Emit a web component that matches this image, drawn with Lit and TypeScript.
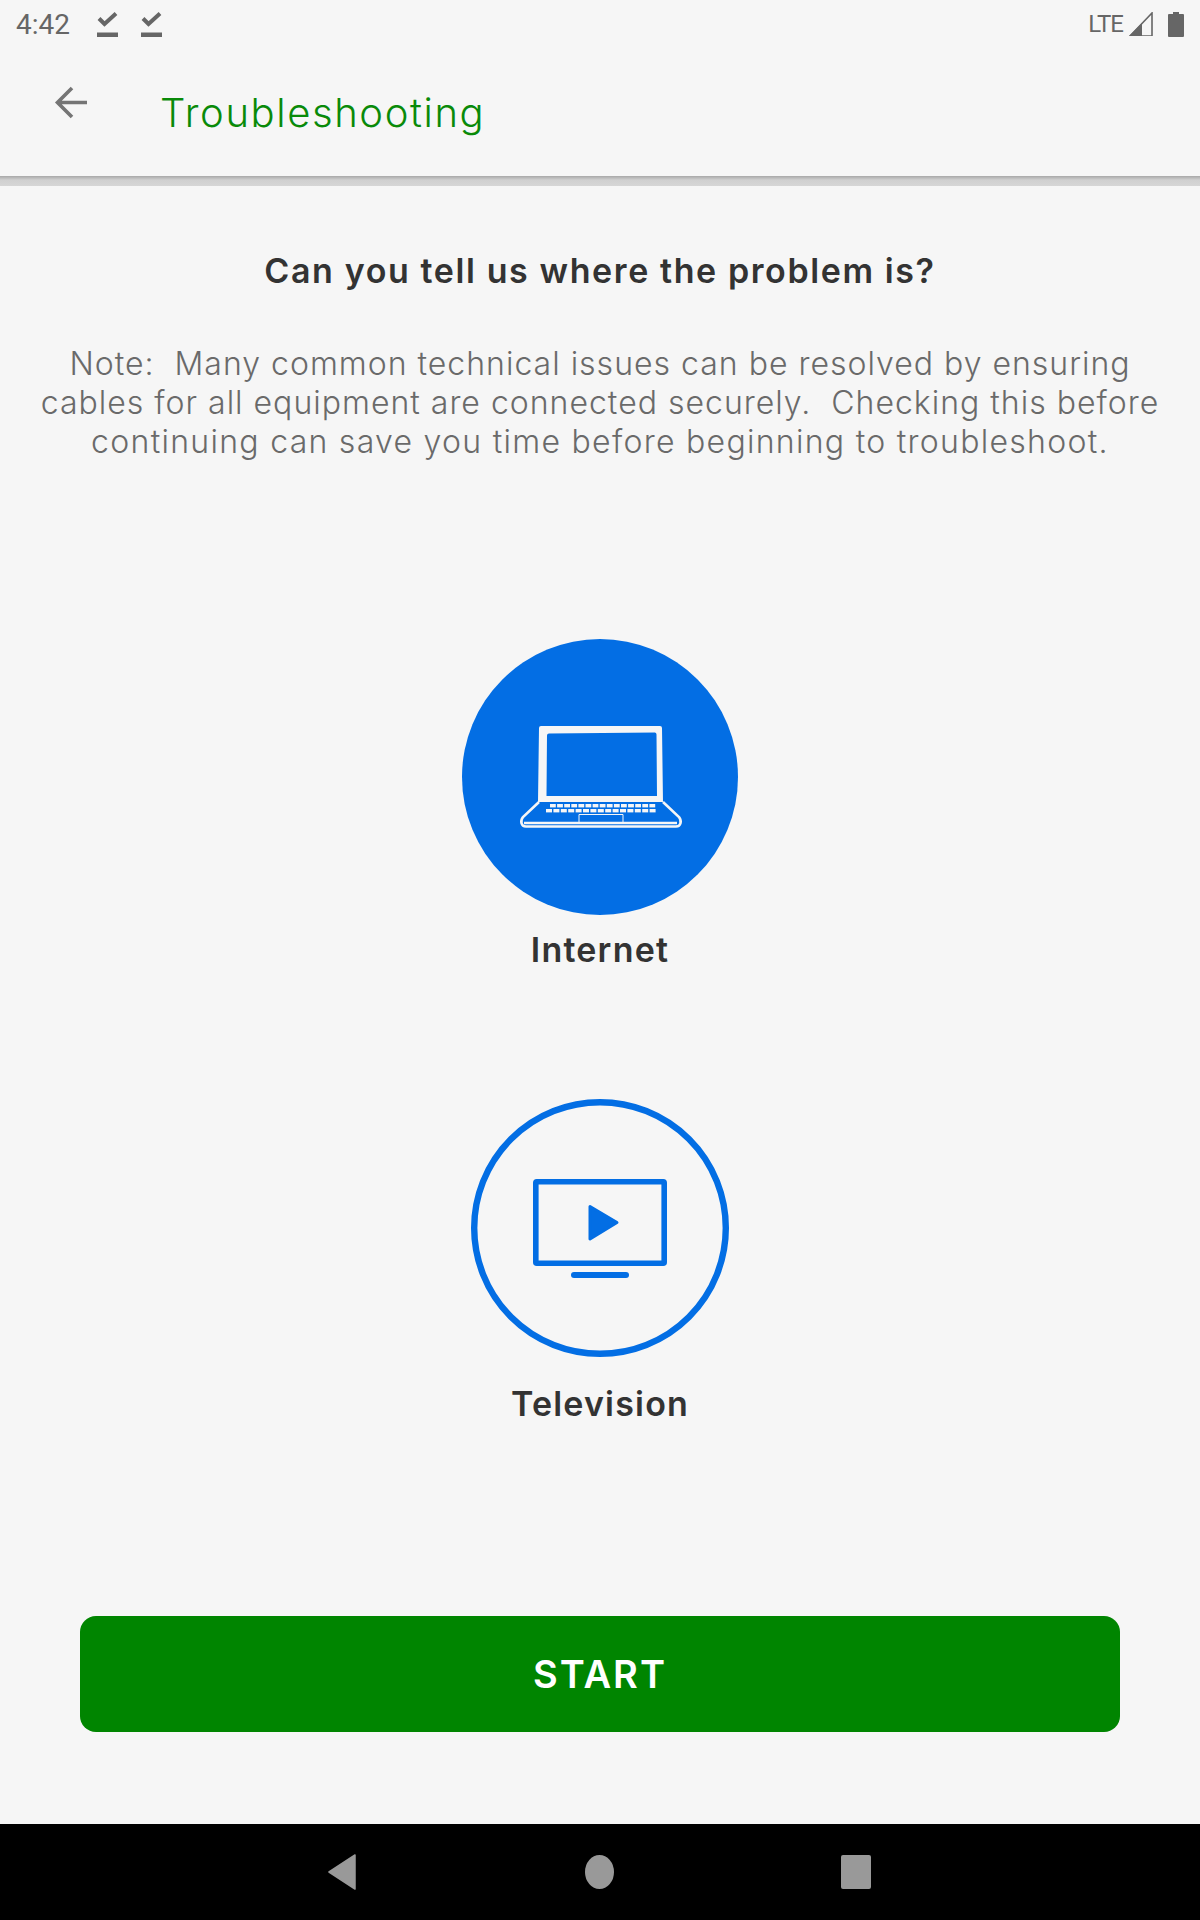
import { LitElement, css, html, svg } from "lit";
import { customElement } from "lit/decorators.js";

// laptop keyboard keys, two slightly fanned rows
const keyRow = (y: number, x0: number, pitch: number, w: number, h: number) =>
  Array.from({ length: 15 }, (_, i) =>
    svg`<rect x=${x0 + i * pitch} y=${y} width=${w} height=${h} fill="#f6f6f6"></rect>`,
  );

const checkIcon = html`
  <svg class="check" viewBox="0 0 21 25" width="21" height="25">
    <path d="M2 6.500 7.500 12 19 1.500" fill="none" stroke="#666" stroke-width="4"></path>
    <rect x="0" y="20.500" width="21" height="4.500" fill="#666"></rect>
  </svg>
`;

@customElement("app-root")
export class AppRoot extends LitElement {
  static styles = css`
    :host {
      display: block;
      width: 1200px;
      height: 1920px;
      background: #f6f6f6;
      font-family: Inter, "Open Sans", sans-serif;
      overflow: hidden;
    }
    .page {
      display: flex;
      flex-direction: column;
      height: 1920px;
    }
    .status {
      height: 48px;
      display: flex;
      align-items: center;
      padding: 0 16px;
      color: #666;
      font-family: Roboto, sans-serif;
      font-size: 28px;
    }
    .time {
      width: 81px;
    }
    .check {
      margin-right: 23px;
    }
    .status-right {
      margin-left: auto;
      display: flex;
      align-items: center;
    }
    .lte {
      font-size: 24px;
      letter-spacing: -1px;
      margin-right: 6px;
    }
    .toolbar {
      height: 128px;
      display: flex;
      align-items: flex-start;
    }
    .back {
      margin: 38px 0 0 54px;
    }
    .title {
      margin: 35px 0 0 73px;
      color: #098a09;
      font-size: 40px;
      line-height: 60px;
      font-weight: 300;
      letter-spacing: 1.6px;
    }
    .shadow {
      height: 10px;
      background: linear-gradient(#a8a8a8, #d0d0d0 40%, #d6d6d6);
    }
    main {
      flex: 1;
      display: flex;
      flex-direction: column;
      align-items: center;
    }
    h1 {
      margin: 63px 0 0;
      font-size: 34px;
      line-height: 44px;
      font-weight: 600;
      color: #333;
      letter-spacing: 1.6px;
    }
    .note {
      margin: 51px 0 0;
      width: 1160px;
      text-align: center;
      font-size: 32px;
      line-height: 39px;
      font-weight: 300;
      color: #6a6a6a;
      letter-spacing: 1px;
      white-space: pre;
    }
    .wide-line {
      letter-spacing: 1.28px;
    }
    .option {
      display: flex;
      flex-direction: column;
      align-items: center;
    }
    .internet {
      margin-top: 178px;
    }
    .tv {
      margin-top: 127px;
    }
    .circle {
      display: block;
    }
    .label {
      font-size: 34px;
      line-height: 44px;
      font-weight: 600;
      color: #333;
      letter-spacing: 1.2px;
    }
    .internet .label {
      margin-top: 13px;
    }
    .tv .label {
      margin-top: 25px;
    }
    .start {
      margin-top: 190px;
      width: 1040px;
      height: 116px;
      border: 0;
      border-radius: 16px;
      background: #008500;
      color: #fff;
      font-family: inherit;
      font-size: 38px;
      font-weight: 600;
      letter-spacing: 2px;
    }
    .nav {
      height: 96px;
      background: #000;
      display: flex;
      align-items: center;
      padding-left: 328px;
    }
    .home {
      margin-left: 229px;
    }
    .recent {
      margin-left: 227px;
    }
  `;

  render() {
    return html`
      <div class="page">
        <div class="status">
          <span class="time">4:42</span>
          ${checkIcon}${checkIcon}
          <div class="status-right">
            <span class="lte">LTE</span>
            <svg viewBox="0 0 24 24" width="24" height="24">
              <path d="M23 1V24H1Z" fill="#f6f6f6" stroke="#666" stroke-width="1.600"></path>
              <path d="M0 24 13 11V24Z" fill="#666"></path>
            </svg>
            <svg viewBox="0 0 16 25" width="16" height="25" style="margin-left:15px">
              <path d="M5 0H11V2H15a1 1 0 0 1 1 1V24a1 1 0 0 1-1 1H1a1 1 0 0 1-1-1V3a1 1 0 0 1 1-1H5Z" fill="#666"></path>
            </svg>
          </div>
        </div>
        <div class="toolbar">
          <svg class="back" viewBox="0 0 33 33" width="33" height="33">
            <path d="M33 16.500H4M18 2 3.500 16.500 18 31" fill="none" stroke="#757575" stroke-width="3.600"></path>
          </svg>
          <span class="title">Troubleshooting</span>
        </div>
        <div class="shadow"></div>
        <main>
          <h1>Can you tell us where the problem is?</h1>
          <p class="note">Note:  Many common technical issues can be resolved by ensuring
cables for all equipment are connected securely.  Checking this before
<span class="wide-line">continuing can save you time before beginning to troubleshoot.</span></p>
          <div class="option internet">
            <svg class="circle" viewBox="0 0 276 276" width="276" height="276">
              <circle cx="138" cy="138" r="138" fill="#036ee4"></circle>
              <path
                fill-rule="evenodd"
                fill="#f6f6f6"
                d="M79 87H198a2 2 0 0 1 2 2L201 163H76L77 89a2 2 0 0 1 2-2ZM87 94.500 193 93.500a2 2 0 0 1 1.500 2L195 157H84.500L85 96.500a2 2 0 0 1 2-2Z"
              ></path>
              <path
                d="M77 163 61 178C58 182 59 187.500 64 187.500H214C219 187.500 220 182 217 178L201 163M62 184H215"
                fill="none"
                stroke="#f6f6f6"
                stroke-width="2.600"
              ></path>
              <path d="M117 183V175.500H161V183" fill="none" stroke="#f6f6f6" stroke-width="1"></path>
              ${keyRow(165, 88, 7.100, 5.800, 3.400)}${keyRow(170, 84, 7.400, 6, 3.400)}
            </svg>
            <span class="label">Internet</span>
          </div>
          <div class="option tv">
            <svg class="circle" viewBox="0 0 258 258" width="258" height="258">
              <circle cx="129" cy="129" r="125.800" fill="none" stroke="#036ee4" stroke-width="6.400"></circle>
              <rect x="64.800" y="82.800" width="128.400" height="81.400" rx="1" fill="none" stroke="#036ee4" stroke-width="5.600"></rect>
              <rect x="100" y="173" width="58" height="6" rx="3" fill="#036ee4"></rect>
              <path d="M119 107.500 146 123.500 119 140Z" fill="#036ee4" stroke="#036ee4" stroke-width="3" stroke-linejoin="round"></path>
            </svg>
            <span class="label">Television</span>
          </div>
          <button class="start">START</button>
        </main>
        <div class="nav">
          <svg viewBox="0 0 28 36" width="28" height="36">
            <path d="M27 1 1 18 27 35Z" fill="#999" stroke="#999" stroke-width="1.500" stroke-linejoin="round"></path>
          </svg>
          <svg class="home" viewBox="0 0 29 34" width="29" height="34">
            <ellipse cx="14.500" cy="17" rx="14.500" ry="17" fill="#999"></ellipse>
          </svg>
          <svg class="recent" viewBox="0 0 30 34" width="30" height="34">
            <rect width="30" height="34" rx="2" fill="#999"></rect>
          </svg>
        </div>
      </div>
    `;
  }
}
